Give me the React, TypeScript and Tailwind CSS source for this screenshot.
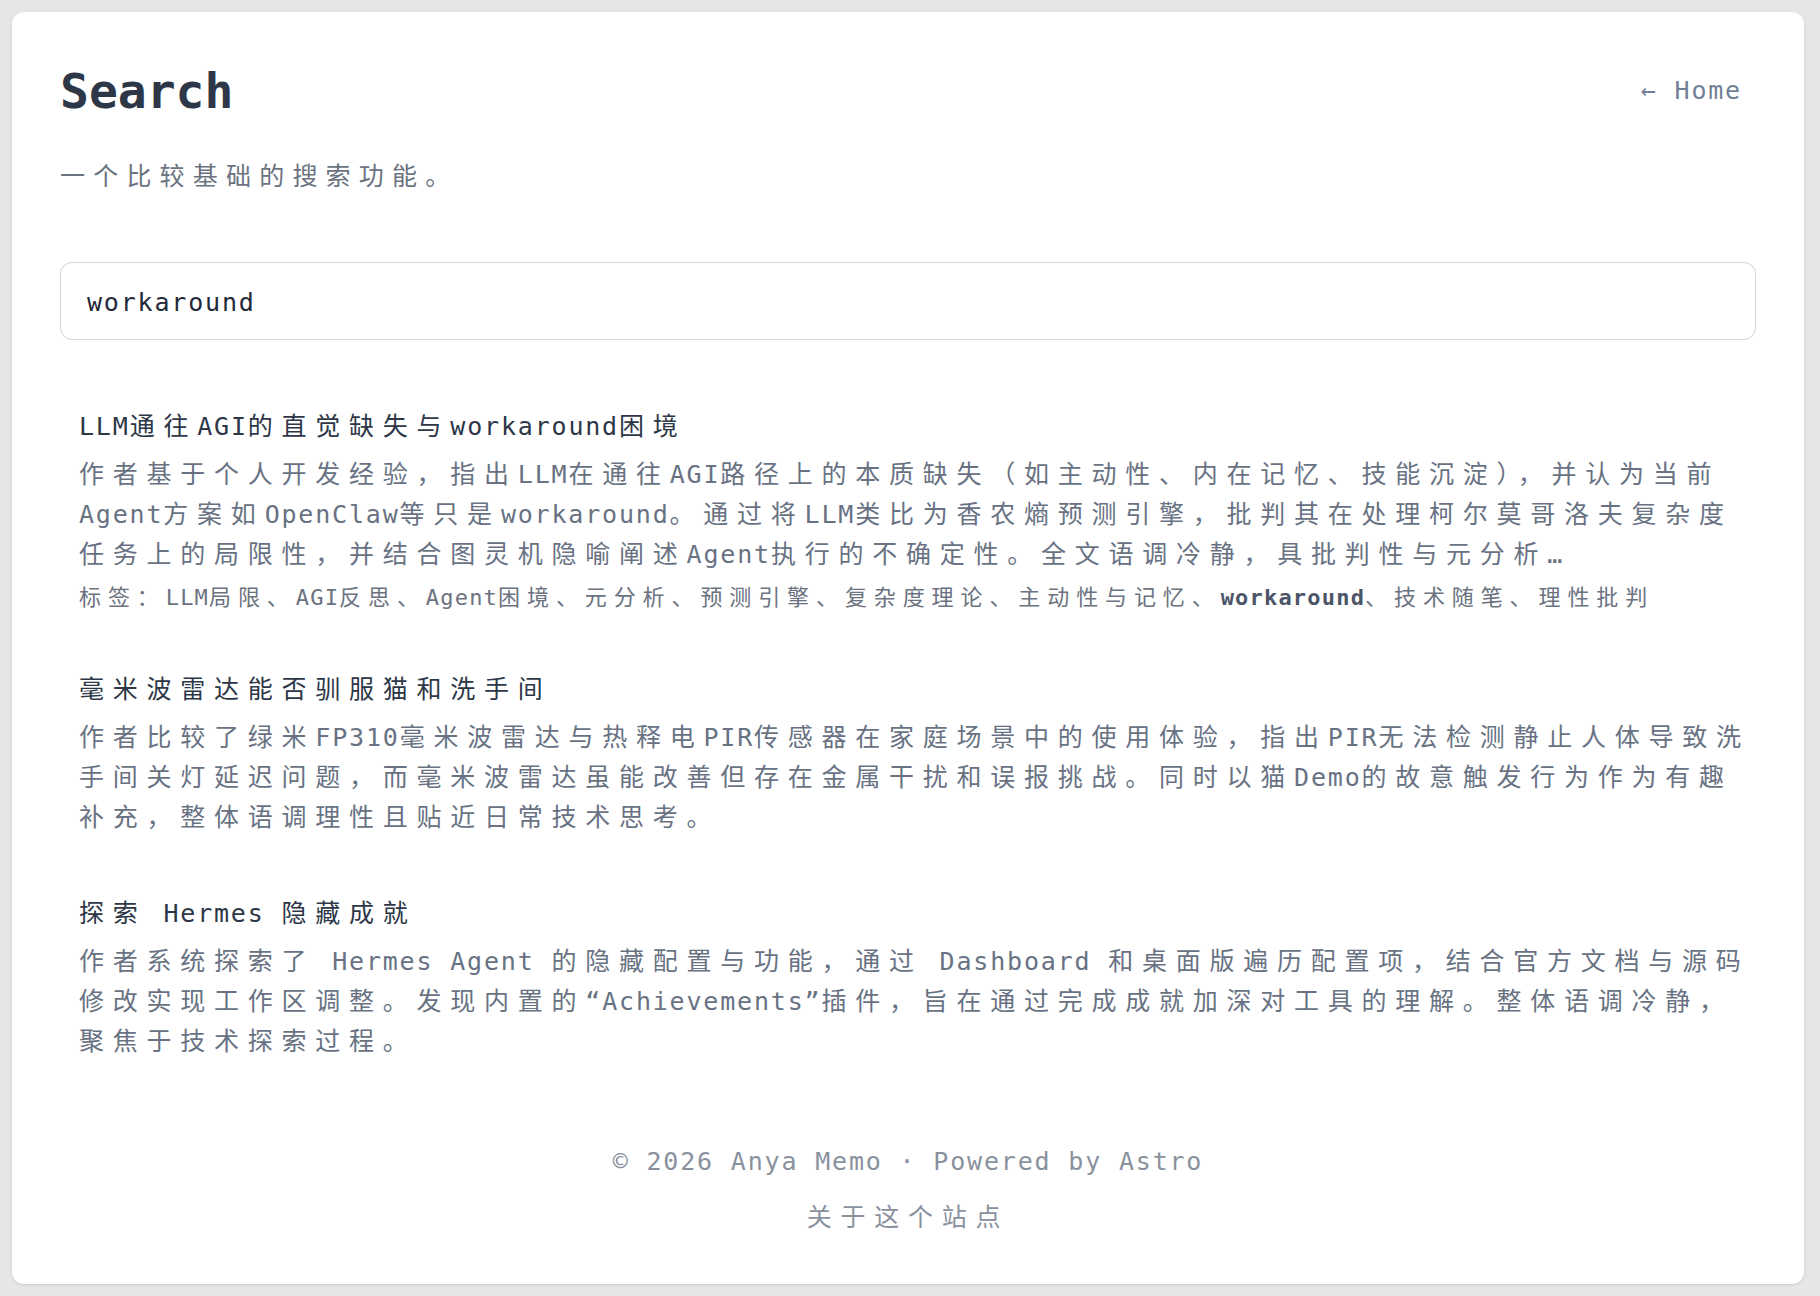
import { useState } from "react"

const LATIN_RUN = /([\u0020-\u007E\u00A9\u00B7\u2026\u2190\u201C\u201D]+)/

const Mixed = ({ text, latin }: { text: string; latin: string }) => (
    <>
        {text.split(LATIN_RUN).map((part, i) =>
            i % 2 === 1 ? <span key={i} className={latin}>{part}</span> : part
        )}
    </>
)

const mono = "font-['DejaVu_Sans_Mono',monospace]"
const bodyLatin = "font-['DejaVu_Sans_Mono',monospace] text-[25px] tracking-[1.82px] leading-none"
const tagLatin = "font-['DejaVu_Sans_Mono',monospace] text-[22px] tracking-[1.2px] leading-none"

const results = [
    {
        title: "LLM通往AGI的直觉缺失与workaround困境",
        summary:
            "作者基于个人开发经验，指出LLM在通往AGI路径上的本质缺失（如主动性、内在记忆、技能沉淀），并认为当前Agent方案如OpenClaw等只是workaround。通过将LLM类比为香农熵预测引擎，批判其在处理柯尔莫哥洛夫复杂度任务上的局限性，并结合图灵机隐喻阐述Agent执行的不确定性。全文语调冷静，具批判性与元分析…",
        tags: ["LLM局限", "AGI反思", "Agent困境", "元分析", "预测引擎", "复杂度理论", "主动性与记忆", "workaround", "技术随笔", "理性批判"],
    },
    {
        title: "毫米波雷达能否驯服猫和洗手间",
        summary:
            "作者比较了绿米FP310毫米波雷达与热释电PIR传感器在家庭场景中的使用体验，指出PIR无法检测静止人体导致洗手间关灯延迟问题，而毫米波雷达虽能改善但存在金属干扰和误报挑战。同时以猫Demo的故意触发行为作为有趣补充，整体语调理性且贴近日常技术思考。",
        tags: [],
    },
    {
        title: "探索 Hermes 隐藏成就",
        summary:
            "作者系统探索了 Hermes Agent 的隐藏配置与功能，通过 Dashboard 和桌面版遍历配置项，结合官方文档与源码修改实现工作区调整。发现内置的“Achievements”插件，旨在通过完成成就加深对工具的理解。整体语调冷静，聚焦于技术探索过程。",
        tags: [],
    },
]

const SearchResult = ({ item, query }: { item: (typeof results)[number]; query: string }) => {
    return (
        <li>
            <h2 className="text-[25px] leading-[40px] tracking-[8.75px] font-normal text-[#2d3748]">
                <Mixed text={item.title} latin={bodyLatin} />
            </h2>
            <p className="mt-2 text-[25px] leading-[40px] tracking-[8.75px] text-[#687283]">
                <Mixed text={item.summary} latin={bodyLatin} />
            </p>
            {item.tags.length > 0 && (
                <p className="mt-[7px] text-[22px] leading-[32px] tracking-[6.9px] text-[#6b7280]">
                    标签：
                    {item.tags.map((tag, i) => (
                        <span key={tag}>
                            {tag === query ? (
                                <span className={`${tagLatin} font-bold text-[#4a5568]`}>{tag}</span>
                            ) : (
                                <Mixed text={tag} latin={tagLatin} />
                            )}
                            {i < item.tags.length - 1 && "、"}
                        </span>
                    ))}
                </p>
            )}
        </li>
    )
}

const App = () => {
    const [query, setQuery] = useState("workaround")

    return (
        <div className="min-h-screen bg-[#e6e6e6] p-3">
            <div className="max-w-[1792px] rounded-xl bg-white px-12 pt-[50px] pb-[49px] shadow-sm font-['Noto_Sans_CJK_SC',sans-serif]">
                <header className="flex items-center justify-between">
                    <h1 className={`${mono} text-[48px] leading-[58px] font-bold text-[#2d3748]`}>Search</h1>
                    <a href="#" className={`${mono} pr-[14px] text-[25px] tracking-[1.82px] text-[#718096]`}>
                        ← Home
                    </a>
                </header>

                <p className="mt-[34px] text-[25px] leading-[40px] tracking-[8.2px] text-[#6b7280]">一个比较基础的搜索功能。</p>

                <input
                    value={query}
                    onChange={(e) => setQuery(e.target.value)}
                    className={`${mono} mt-[68px] block h-[78px] w-full rounded-xl border border-[#d4d4d8] pl-[26px] pt-[3px] text-[25px] tracking-[1.82px] text-[#1f2937] outline-none`}
                />

                <ul className="mt-[64px] flex flex-col gap-[56px] pl-[19px]">
                    {results.map((item) => (
                        <SearchResult key={item.title} item={item} query={query} />
                    ))}
                </ul>

                <footer className="mt-[83px] text-center leading-[40px] text-[#8a919e]">
                    <p className={`${mono} text-[25px] tracking-[1.82px]`}>© 2026 Anya Memo · Powered by Astro</p>
                    <p className="mt-[13px] text-[25px] tracking-[8.75px]">关于这个站点</p>
                </footer>
            </div>
        </div>
    )
}

export default App
